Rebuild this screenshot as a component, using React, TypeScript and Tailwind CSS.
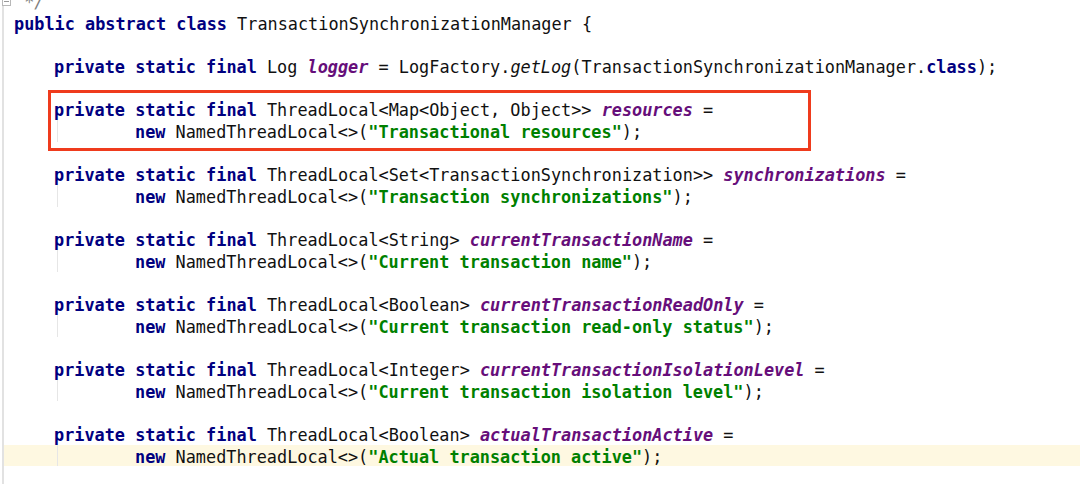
type Tok = { t: string; k?: 'kw' | 'field' | 'str' | 'call' | 'cmt' };
type Line = { toks: Tok[]; indent: 0 | 1 | 2; current?: boolean };

const kw = (t: string): Tok => ({ t, k: 'kw' });
const fld = (t: string): Tok => ({ t, k: 'field' });
const str = (t: string): Tok => ({ t, k: 'str' });
const tx = (t: string): Tok => ({ t });

const decl = (type: string, name: string, label: string, current = false): Line[] => [
  { indent: 1, toks: [kw('private static final'), tx(` ${type} `), fld(name), tx(' =')] },
  { indent: 2, current, toks: [kw('new'), tx(' NamedThreadLocal<>('), str(`"${label}"`), tx(');')] },
];

const blank: Line = { indent: 0, toks: [] };

const head: Line[] = [
  { indent: 0, toks: [{ t: ' */', k: 'cmt' }] },
  { indent: 0, toks: [kw('public abstract class'), tx(' TransactionSynchronizationManager {')] },
  blank,
  {
    indent: 1,
    toks: [
      kw('private static final'),
      tx(' Log '),
      fld('logger'),
      tx(' = LogFactory.'),
      { t: 'getLog', k: 'call' },
      tx('(TransactionSynchronizationManager.'),
      kw('class'),
      tx(');'),
    ],
  },
  blank,
];

const boxed = decl('ThreadLocal<Map<Object, Object>>', 'resources', 'Transactional resources');

const rest: Line[] = [
  blank,
  ...decl('ThreadLocal<Set<TransactionSynchronization>>', 'synchronizations', 'Transaction synchronizations'),
  blank,
  ...decl('ThreadLocal<String>', 'currentTransactionName', 'Current transaction name'),
  blank,
  ...decl('ThreadLocal<Boolean>', 'currentTransactionReadOnly', 'Current transaction read-only status'),
  blank,
  ...decl('ThreadLocal<Integer>', 'currentTransactionIsolationLevel', 'Current transaction isolation level'),
  blank,
  ...decl('ThreadLocal<Boolean>', 'actualTransactionActive', 'Actual transaction active', true),
];

const tokClass: Record<string, string> = {
  kw: 'font-bold text-[#000080]',
  field: 'font-bold italic text-[#660e7a]',
  str: 'font-bold text-[#008000]',
  call: 'italic',
  cmt: 'italic text-[#808080]',
};

function CodeLine({ line }: { line: Line }) {
  const text = (
    <span className="whitespace-pre">
      {line.toks.map((tok, i) => (
        <span key={i} className={tok.k ? tokClass[tok.k] : undefined}>
          {tok.t}
        </span>
      ))}
      {line.toks.length === 0 ? ' ' : null}
    </span>
  );

  return (
    <div className={`flex h-[21.67px] items-center ${line.current ? 'bg-[#fef8e1]' : ''}`}>
      {line.indent === 0 && <div className="translate-y-[2px] pl-[10px]">{text}</div>}
      {line.indent === 1 && <div className="translate-y-[2px] pl-[50px]">{text}</div>}
      {line.indent === 2 && (
        <>
          <div className="w-[53px] shrink-0" />
          <div className="h-full w-px shrink-0 bg-[#e6e6e6]" />
          <div className="translate-y-[2px] pl-[77px]">{text}</div>
        </>
      )}
    </div>
  );
}

export default function App() {
  return (
    <div className="relative flex h-[484px] w-[1080px] overflow-hidden bg-white font-['DejaVu_Sans_Mono',monospace] text-[16.85px] text-[#111]">
      {/* gutter */}
      <div className="flex w-[4px] shrink-0 justify-end">
        <div className="h-full w-[2px] bg-[#e2e2e2]" />
      </div>
      {/* fold marker */}
      <svg className="absolute left-[2px] top-[-3px]" width="9" height="9" viewBox="0 0 9 9">
        <rect x="0.5" y="0.5" width="8" height="8" fill="white" stroke="#b8b8b8" />
        <line x1="2" y1="4.5" x2="7" y2="4.5" stroke="#9a9a9a" />
      </svg>

      <div className="-mt-[10px] flex min-w-0 flex-1 flex-col">
        {head.map((l, i) => (
          <CodeLine key={`h${i}`} line={l} />
        ))}
        <div className="relative">
          {boxed.map((l, i) => (
            <CodeLine key={`b${i}`} line={l} />
          ))}
          {/* annotation box */}
          <div className="pointer-events-none absolute -bottom-[9px] -top-[8px] left-[44px] w-[763px] border-[3px] border-[#ef3b1d]" />
        </div>
        {rest.map((l, i) => (
          <CodeLine key={`r${i}`} line={l} />
        ))}
      </div>
    </div>
  );
}
